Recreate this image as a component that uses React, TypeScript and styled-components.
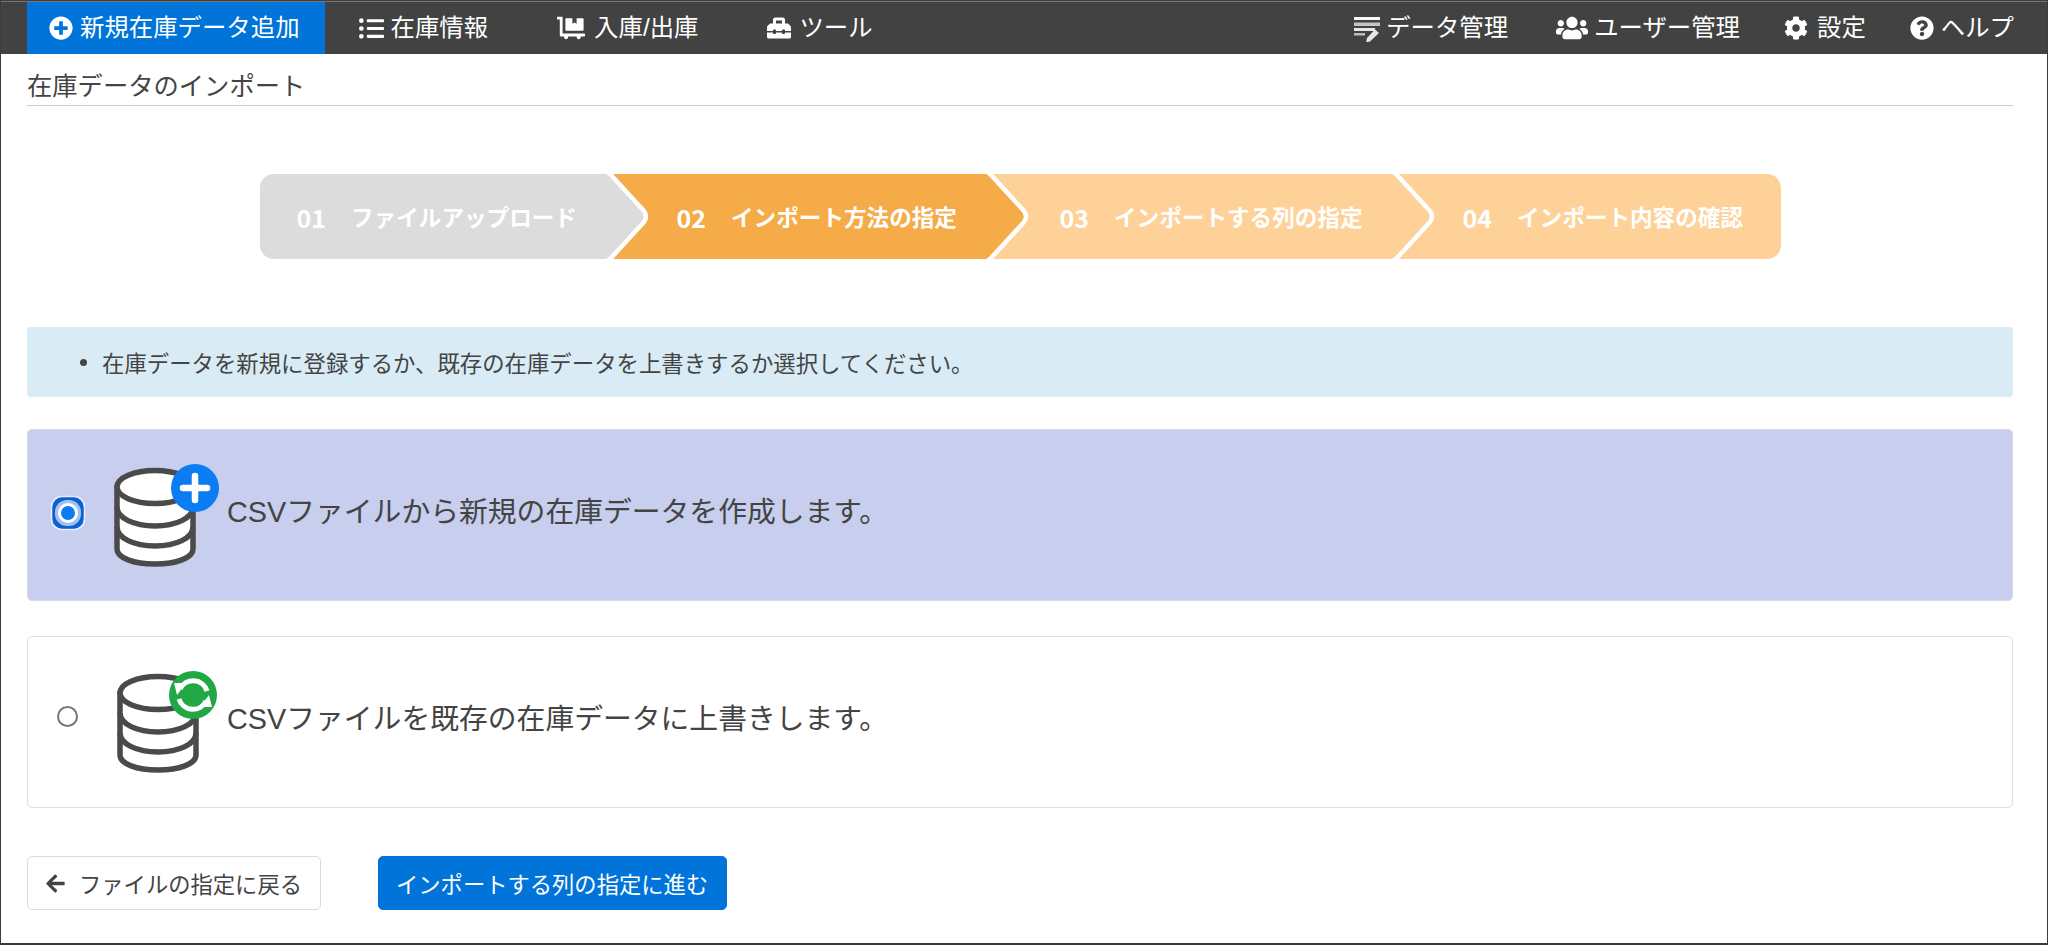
import React from "react";
import styled, { createGlobalStyle } from "styled-components";
import {
  FaPlusCircle, FaListUl, FaDollyFlatbed, FaToolbox, FaUsers, FaCog, FaQuestionCircle, FaArrowLeft,
} from "react-icons/fa";

const Global = createGlobalStyle`
  html, body { margin: 0; padding: 0; background: #fff; }
  body { font-family: "Liberation Sans", "Noto Sans CJK JP", sans-serif; color: #444; }
`;

const Page = styled.div`
  box-sizing: border-box; width: 2048px; height: 945px; border: 1px solid #3c3c3c; border-width: 1px 1px 2px 1px;
  display: flex; flex-direction: column; overflow: hidden;
`;
const Nav = styled.nav`
  display: flex; align-items: stretch; height: 52px; background: #424242; padding: 0 0 0 26px; border-top: 1px solid #777;
`;
const NavRight = styled.div`display: flex; margin-left: auto; padding-right: 11px;`;
const NavItem = styled.a<{ $active?: boolean; $pad?: number; $padR?: number; $gap?: number }>`
  display: flex; align-items: center; gap: ${p => p.$gap ?? 7}px;
  padding: 0 ${p => p.$padR ?? p.$pad ?? 34}px 0 ${p => p.$pad ?? 34}px;
  color: #fff; font-size: 24.4px; line-height: 1; white-space: nowrap;
  background: ${p => (p.$active ? "#0074d9" : "transparent")};
  svg { flex: none; }
`;
const Main = styled.main`display: flex; flex-direction: column; padding: 0 34px 0 26px;`;
const Title = styled.h1`
  margin: 0; height: 52px; padding-top: 15px; line-height: 34px; font-size: 25.3px; font-weight: 400; color: #444;
  border-bottom: 1px solid #c9c9c9; box-sizing: border-box;
`;
const Stepper = styled.div`display: flex; width: 1521px; height: 85px; margin: 68px auto 0; border-radius: 14px;`;
const Step = styled.div<{ $w: number; $bg: string; $pl: number; $first?: boolean; $last?: boolean }>`
  position: relative; display: flex; align-items: center; box-sizing: border-box;
  width: ${p => p.$w}px; padding-left: ${p => p.$pl}px; background: ${p => p.$bg};
  color: #fff; font-size: 22.6px; font-weight: 700; white-space: nowrap;
  border-radius: ${p => (p.$first ? "14px 0 0 14px" : p.$last ? "0 14px 14px 0" : "0")};
`;
const StepNum = styled.span`display: inline-block; font-size: 25px; font-weight: 700; margin-right: 25px; font-family: "Noto Sans CJK JP", sans-serif;`;
const StepLabel = styled.span`font-family: "Noto Sans CJK JP", sans-serif;`;
const Chevron = styled.svg`position: absolute; right: -40px; top: 0; width: 40px; height: 85px; overflow: visible; z-index: 1;`;
const Info = styled.div`
  margin-top: 68px; height: 70px; background: #d9ecf6; border-radius: 4px; box-sizing: border-box;
  display: flex; align-items: center; padding-left: 53px; font-size: 22.4px; color: #444;
`;
const Bullet = styled.span`width: 7px; height: 7px; border-radius: 50%; background: #444; margin-right: 15px; flex: none;`;
const Option = styled.label<{ $selected?: boolean; $top: number }>`
  display: flex; align-items: center; box-sizing: border-box; height: 172px; margin-top: ${p => p.$top}px;
  border: 1px solid ${p => (p.$selected ? "#d5d9ea" : "#dedede")}; border-radius: 5px;
  background: ${p => (p.$selected ? "#c8ceed" : "#fff")};
  padding-bottom: 6px;
`;
const RadioCell = styled.span`width: 79px; display: flex; justify-content: center; flex: none; margin-bottom: -2px;`;
const RadioOff = styled.span`
  width: 21px; height: 21px; box-sizing: border-box; border: 2px solid #767676; border-radius: 50%; background: #fff;
  margin-bottom: 8px;
`;
const DbSvg = styled.svg<{ $ml: number; $mr: number; $mt: number }>`
  width: 110px; height: 110px; margin: ${p => p.$mt}px ${p => p.$mr}px 0 ${p => p.$ml}px; flex: none; overflow: visible;
`;
const OptionText = styled.span`font-size: 28.8px; color: #444; white-space: nowrap; margin-bottom: 6px;`;
const Actions = styled.div`display: flex; gap: 57px; margin-top: 48px;`;
const Button = styled.button<{ $primary?: boolean }>`
  display: flex; align-items: center; gap: 13px; box-sizing: border-box; height: 54px; padding: 0 18px 0 17px; 
  font: 400 22.3px "Liberation Sans", "Noto Sans CJK JP", sans-serif; border-radius: 5px; white-space: nowrap;
  border: 1px solid ${p => (p.$primary ? "#0074d9" : "#dcdcdc")};
  background: ${p => (p.$primary ? "#0074d9" : "#fff")};
  color: ${p => (p.$primary ? "#fff" : "#444")};
`;

const DataIcon = () => (
  <svg width="27" height="27" viewBox="0 0 27 27">
    <rect x="0" y="2" width="26" height="3" fill="#f8f8f8" />
    <rect x="0" y="7.5" width="26" height="3.5" fill="#c4c4c4" />
    <rect x="0" y="13" width="21" height="3" fill="#e8e8e8" />
    <rect x="0" y="18" width="11" height="2.5" fill="#bdbdbd" />
    <path d="M21 14.5l4 3.5-9 8.5-4 1 1-4.5z" fill="#e6e6e6" />
  </svg>
);

const Db = ({ ml, mr, mt, badge }: { ml: number; mr: number; mt: number; badge: "plus" | "sync" }) => (
  <DbSvg $ml={ml} $mr={mr} $mt={mt} viewBox="0 0 110 110">
    <g fill="#fff" stroke="#4a4a4a" strokeWidth="5.5">
      <path d="M3 21V82c0 9 17 15 38 15s38-6 38-15V21z" />
      <ellipse cx="41" cy="20" rx="38" ry="16.5" />
      <path d="M3 40c0 11 17 19 38 19s38-8 38-19" fill="none" />
      <path d="M3 60c0 11 17 19 38 19s38-8 38-19" fill="none" />
    </g>
    {badge === "plus" ? (
      <g>
        <circle cx="81" cy="21" r="24" fill="#0b7cf2" />
        <path d="M81 9v24M69 21h24" stroke="#fff" strokeWidth="6.5" strokeLinecap="round" />
      </g>
    ) : (
      <g transform="translate(76 22)">
        <circle r="24" fill="#22a745" />
        <path d="M-13 -6A14.5 14.5 0 0 1 14 -4" fill="none" stroke="#fff" strokeWidth="5" />
        <path d="M13 6A14.5 14.5 0 0 1 -14 4" fill="none" stroke="#fff" strokeWidth="5" />
        <path d="M-19 -12H-7L-16 0zM19 12H7L16 0z" fill="#fff" />
      </g>
    )}
  </DbSvg>
);

const RadioOn = () => (
  <svg width="36" height="36" viewBox="0 0 36 36">
    <rect x="1.5" y="1.5" width="33" height="33" rx="10.5" fill="#0a62cc" stroke="#e8ecff" strokeWidth="1.6" />
    <rect x="5" y="5" width="26" height="26" rx="12" fill="#a3c1f0" />
    <circle cx="18" cy="18" r="10" fill="#fff" />
    <circle cx="18" cy="18" r="7" fill="#0b7cf2" />
  </svg>
);

const Chev = ({ fill }: { fill: string }) => (
  <Chevron viewBox="0 0 40 85">
    <path d="M-1 -3L36 37Q40 42.5 36 48L-1 88Z" fill={fill} />
    <path d="M-1 -3Q1 0 3 1L36 37Q40 42.5 36 48L3 84Q1 85 -1 88" fill="none" stroke="#fff" strokeWidth="4.5" strokeLinejoin="round" />
  </Chevron>
);

const G = "#dcdcdc", A = "#f5ab48", L = "#fed198";

export default function App() {
  return (
    <Page>
      <Global />
      <Nav>
        <NavItem $active $pad={22} $padR={25} $gap={7}><FaPlusCircle size={24} />新規在庫データ追加</NavItem>
        <NavItem $gap={7}><FaListUl size={25} />在庫情報</NavItem>
        <NavItem $pad={35} $gap={9}><FaDollyFlatbed size={28} />入庫/出庫</NavItem>
        <NavItem $gap={8}><FaToolbox size={24} />ツール</NavItem>
        <NavRight>
          <NavItem $pad={23} $padR={26} $gap={5}><DataIcon />データ管理</NavItem>
          <NavItem $pad={22} $gap={6}><FaUsers size={32} />ユーザー管理</NavItem>
          <NavItem $pad={22} $gap={9}><FaCog size={24} />設定</NavItem>
          <NavItem $pad={22} $gap={7}><FaQuestionCircle size={24} />ヘルプ</NavItem>
        </NavRight>
      </Nav>
      <Main>
        <Title>在庫データのインポート</Title>
        <Stepper>
          <Step $w={348} $bg={G} $pl={37} $first><StepNum>01</StepNum><StepLabel>ファイルアップロード</StepLabel><Chev fill={G} /></Step>
          <Step $w={380} $bg={A} $pl={69}><StepNum>02</StepNum><StepLabel>インポート方法の指定</StepLabel><Chev fill={A} /></Step>
          <Step $w={406} $bg={L} $pl={72}><StepNum>03</StepNum><StepLabel>インポートする列の指定</StepLabel><Chev fill={L} /></Step>
          <Step $w={387} $bg={L} $pl={69} $last><StepNum>04</StepNum><StepLabel>インポート内容の確認</StepLabel></Step>
        </Stepper>
        <Info><Bullet />在庫データを新規に登録するか、既存の在庫データを上書きするか選択してください。</Info>
        <Option $selected $top={32}>
          <RadioCell><RadioOn /></RadioCell>
          <Db ml={7} mr={3} mt={19} badge="plus" />
          <OptionText>CSVファイルから新規の在庫データを作成します。</OptionText>
        </Option>
        <Option $top={35}>
          <RadioCell><RadioOff /></RadioCell>
          <Db ml={10} mr={0} mt={17} badge="sync" />
          <OptionText>CSVファイルを既存の在庫データに上書きします。</OptionText>
        </Option>
        <Actions>
          <Button><FaArrowLeft size={21} />ファイルの指定に戻る</Button>
          <Button $primary>インポートする列の指定に進む</Button>
        </Actions>
      </Main>
    </Page>
  );
}
